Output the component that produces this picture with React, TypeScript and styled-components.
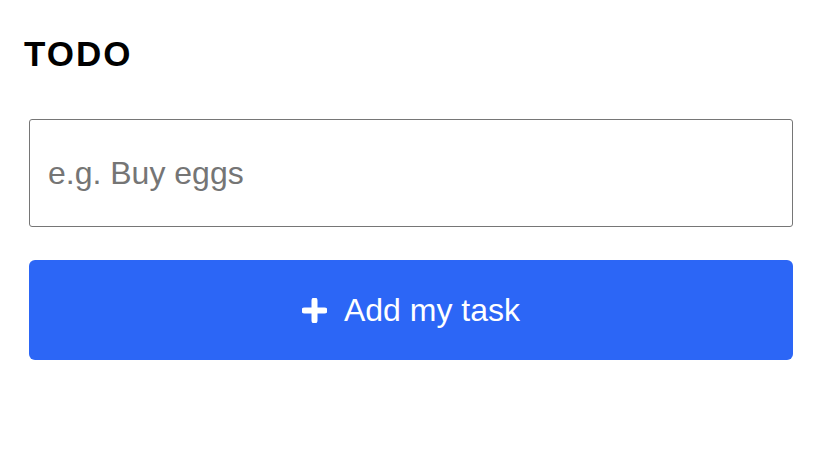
import React, { useState } from "react";
import styled, { createGlobalStyle } from "styled-components";

const GlobalStyle = createGlobalStyle`
  html, body {
    margin: 0;
    padding: 0;
    background: #ffffff;
    font-family: "Liberation Sans", Arial, sans-serif;
  }
`;

const Page = styled.div`
  display: flex;
  flex-direction: column;
  padding: 34px 27px 0 24px;
`;

const Title = styled.h1`
  margin: 0;
  font-size: 35px;
  line-height: 40px;
  font-weight: 700;
  letter-spacing: 2px;
  color: #000;
`;

const Form = styled.form`
  display: flex;
  flex-direction: column;
  gap: 33px;
  margin: 45px 0 0 5px;
`;

const TaskInput = styled.input`
  box-sizing: border-box;
  height: 108px;
  width: 100%;
  padding: 0 18px;
  border: 1px solid #767676;
  border-radius: 3px;
  font-family: "Liberation Sans", Arial, sans-serif;
  font-size: 32px;
  color: #222;
  outline: none;

  &::placeholder {
    color: #757575;
  }
`;

const AddButton = styled.button`
  display: flex;
  align-items: center;
  justify-content: center;
  gap: 17px;
  height: 100px;
  width: 100%;
  border: none;
  border-radius: 6px;
  background: #2c66f6;
  color: #fff;
  font-family: "Liberation Sans", Arial, sans-serif;
  font-size: 32px;
  cursor: pointer;
`;

const PlusIcon = () => (
  <svg width="25" height="25" viewBox="0 0 25 25" aria-hidden="true">
    <path d="M12.5 2.5v20M2.5 12.5h20" stroke="#fff" strokeWidth="6" strokeLinecap="round" />
  </svg>
);

export default function App() {
  const [task, setTask] = useState("");

  return (
    <Page>
      <GlobalStyle />
      <Title>TODO</Title>
      <Form onSubmit={(e) => e.preventDefault()}>
        <TaskInput
          value={task}
          placeholder="e.g. Buy eggs"
          onChange={(e) => setTask(e.target.value)}
        />
        <AddButton type="submit">
          <PlusIcon />
          Add my task
        </AddButton>
      </Form>
    </Page>
  );
}
